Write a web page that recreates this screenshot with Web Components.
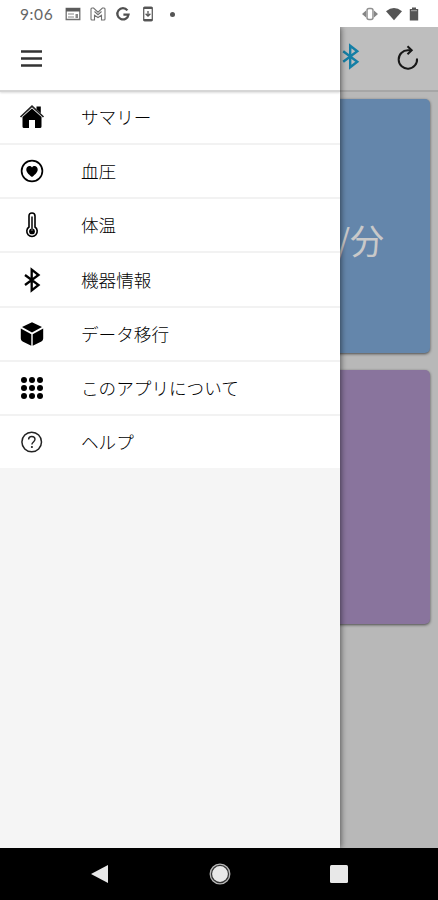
<!DOCTYPE html>
<html lang="ja">
<head>
<meta charset="utf-8">
<title>サマリー</title>
<style>
html,body{margin:0;height:100%;overflow:hidden}
body{font-family:"Noto Sans CJK JP",sans-serif;color:#222}
</style>
</head>
<body>
<health-app></health-app>
<script>
const ICONS = {
  news: '<path d="M1.2 2.5h13.6v11H1.2z" fill="none" stroke="#707070" stroke-width="1.3"/><path d="M1 2h14v3.5H1z" fill="#5c5c5c"/><path d="M3 8h6M3 11h6" stroke="#888" stroke-width="1.2"/><path d="M10.5 8H13v4h-2.5z" fill="#888"/>',
  mail: '<path d="M1 3q0-1 1-1h1.6L8 6.2 12.4 2H14q1 0 1 1v10q0 1-1 1h-2.5V9.2L8 11.5 4.500 9.200V14H2q-1 0-1-1zM4.500 5.500L8 8.700l3.500-3.200" fill="none" stroke="#707070" stroke-width="1.1"/>',
  google: '<path d="M12.400 4.400A5.600 5.600 0 1 0 13.500 8.600H8.400" fill="none" stroke="#505050" stroke-width="2.300"/>',
  update: '<rect x="3.700" y="1.200" width="8.600" height="13.600" rx="1" fill="none" stroke="#606060" stroke-width="1.300"/><path d="M3.700 2h8.600M3.700 14h8.600" stroke="#555" stroke-width="2"/><path d="M8 5v5M5.600 7.800L8 10.200l2.400-2.400" fill="none" stroke="#555" stroke-width="1.300"/>',
  vibrate: '<rect x="5" y="2.500" width="6" height="11" rx="2" fill="none" stroke="#909090" stroke-width="1.500"/><path d="M4 4.500L0 8l4 3.500zM12 4.500L16 8l-4 3.500z" fill="#858585"/>',
  wifi: '<path d="M0 5.200Q8-1 16 5.200L8 14.200z" fill="#555"/>',
  battery: '<path d="M6 1.500h4V3h2.200v11.500H3.800V3H6z" fill="#555"/><path d="M5 4.700h6" stroke="#aaa"/>',
  menu: '<path d="M0 4h24M0 12h24M0 20h24" stroke="#333" stroke-width="2.700"/>',
  bluetooth: '<path d="M5 7l13.500 10-6.800 5.300V1.700L18.500 7 5 17" fill="none" stroke="currentColor" stroke-width="2.300"/>',
  reload: '<path d="M21 12.500A9.200 9.200 0 1 1 12 4.300h2.500" fill="none" stroke="#171717" stroke-width="2"/><path d="M11.500.3l4.200 4-4.200 4" fill="none" stroke="#171717" stroke-width="2"/>',
  home: '<path d="M.5 12L12 1.200 23.500 12" fill="none" stroke="#222" stroke-width="1.700"/><path d="M16.500 1.500h4.300v6.700L16.500 4.300zM2.500 12.100L12 3.400l9.500 8.700v9.400q0 1.500-1.500 1.500h-5v-8H9v8H4q-1.500 0-1.500-1.500z" fill="#000"/>',
  heart: '<circle cx="12" cy="12" r="10.400" fill="none" stroke="#000" stroke-width="1.700"/><path d="M12 18C8 14.700 6.300 12.800 6.300 10.400c0-3.300 4-4.500 5.700-1.800 1.700-2.700 5.700-1.500 5.700 1.800 0 2.400-1.700 4.300-5.700 7.600z"/>',
  thermo: '<path d="M9 14V3q0-3 3-3t3 3v11a5.200 5.200 0 1 1-6 0z" fill="none" stroke="#000" stroke-width="1.600"/><circle cx="12" cy="18.400" r="2.900"/><path d="M12 3.500V18" stroke="#444" stroke-width="2"/>',
  cube: '<path d="M12 .3l10 4.700-10 5.400L2 5zM.8 6.500l10.500 5.700v11.500L2.600 19.500q-1.800-1-1.800-3zM23.200 6.500l-10.500 5.700v11.500l8.700-4.200q1.800-1 1.800-3z"/>',
  grid: '<circle cx="4" cy="4" r="3"/><circle cx="12" cy="4" r="3"/><circle cx="20" cy="4" r="3"/><circle cx="4" cy="12" r="3"/><circle cx="12" cy="12" r="3"/><circle cx="20" cy="12" r="3"/><circle cx="4" cy="20" r="3"/><circle cx="12" cy="20" r="3"/><circle cx="20" cy="20" r="3"/>',
  help: '<circle cx="11.700" cy="12" r="9.800" fill="none" stroke="#222" stroke-width="1.500"/><path d="M8.600 9.400c0-3.900 6.400-3.800 6.400-.1 0 2.600-3.100 2.700-3.100 5.300" fill="none" stroke="#222" stroke-width="1.400"/><circle cx="11.900" cy="17" r="1.100" fill="#222"/>',
  back: '<path d="M17 0v18L0 9z" fill="#e8e8e8"/>',
  circle: '<circle cx="11" cy="11" r="9.800" fill="#333" stroke="#b8b8b8" stroke-width="1.300"/><circle cx="11" cy="11" r="7.900" fill="#e8e8e8"/>',
  square: '<rect width="18" height="18" rx="1.500" fill="#e8e8e8"/>'
};
const BOX = {news:16,mail:16,google:16,update:16,vibrate:16,wifi:16,battery:16,back:18,circle:22,square:18};

function define(name, html, setup) {
  customElements.define(name, class extends HTMLElement {
    connectedCallback() {
      if (this.shadowRoot) return;
      this.attachShadow({mode:'open'}).innerHTML = html;
      if (setup) setup(this);
    }
  });
}

define('app-icon', '<style>:host{display:block;flex:none}svg{display:block;width:100%;height:100%;overflow:visible}</style><svg aria-hidden="true"></svg>', el => {
  const n = el.getAttribute('name'), b = BOX[n] || 24, s = el.shadowRoot.querySelector('svg');
  s.setAttribute('viewBox', `0 0 ${b} ${b}`);
  s.innerHTML = ICONS[n];
});

define('status-bar', `<style>
:host{display:flex;align-items:center;height:27px;box-sizing:border-box;padding:1px 16px 0 20px;background:#fff}
time{font:15.5px/26px Lato,sans-serif;color:#666;width:45px;letter-spacing:.6px}
.l{display:flex;align-items:center;gap:9px}.l app-icon{width:16px;height:16px}
i{width:5px;height:5px;border-radius:50%;background:#555;margin-left:5px}
.r{display:flex;gap:8px;margin-left:auto}.r app-icon{width:16px;height:16px}
.r .b{margin-left:-4px}
</style><time>9:06</time><div class="l"><app-icon name="news"></app-icon><app-icon name="mail"></app-icon><app-icon name="google"></app-icon><app-icon name="update"></app-icon><i></i></div>
<div class="r"><app-icon name="vibrate"></app-icon><app-icon name="wifi"></app-icon><app-icon name="battery" class="b"></app-icon></div>`);

define('summary-page', `<style>
:host{display:flex;flex-direction:column;height:100%;background:#b8b8b8}
header{height:65px;box-sizing:border-box;flex:none;display:flex;justify-content:flex-end;align-items:center;gap:33px;padding:0 18px 3px;background:#bebebe;border-bottom:2px solid #a6a6a6}
.bt{width:25px;height:25px;color:#147fa6;margin-top:-2px}.re{width:24px;height:24px;margin-top:1px}
main{display:flex;flex-direction:column;gap:17px;padding:7px 8px 0}
</style><header><app-icon class="bt" name="bluetooth"></app-icon><app-icon class="re" name="reload"></app-icon></header><main><slot></slot></main>`);

define('metric-card', `<style>
:host{display:flex;justify-content:flex-end;box-sizing:border-box;height:254px;border-radius:5px;padding:114px 46px 0;box-shadow:0 1px 3px #0009;font-size:34px;line-height:54px;color:#c9c9c9;font-weight:400}
:host([tone=blue]){background:#6486ab}:host([tone=purple]){background:#89749d}
</style><slot></slot>`);

define('menu-row', `<style>
:host{display:flex;align-items:center;height:54.25px;box-sizing:border-box;background:#fff;border-bottom:2px solid #f2f2f2;padding-left:20px;font-size:17.6px;line-height:26px;color:#000;font-weight:300}
:host(:last-child){border:0;height:52px}
app-icon{width:24px;height:24px;color:#000}span{margin-left:37px}
</style><app-icon></app-icon><span><slot></slot></span>`, el => {
  const old = el.shadowRoot.querySelector('app-icon');
  const icon = document.createElement('app-icon');
  icon.setAttribute('name', el.getAttribute('icon'));
  old.replaceWith(icon);
});

define('side-drawer', `<style>
:host{display:block;background:#f5f5f5;box-shadow:1px 0 6px #0008}
header{height:65px;box-sizing:border-box;background:#fff;border-bottom:2px solid #d6d6d6;padding:21px 0 0 21px;box-shadow:0 1px 2px #0002;position:relative}
app-icon{width:21px;height:21px}
nav{display:block;margin-top:-1.3px}
</style><header><app-icon name="menu"></app-icon></header><nav><slot></slot></nav>`);

define('nav-bar', `<style>
:host{display:flex;align-items:center;background:#000;height:52px;flex:none;box-sizing:border-box;padding-left:91px}
.b,.s{width:18px;height:18px}.c{width:22px;height:22px;margin-left:100px}.s{margin-left:99px}
</style><app-icon class="b" name="back"></app-icon><app-icon class="c" name="circle"></app-icon><app-icon class="s" name="square"></app-icon>`);

define('health-app', `<style>
:host{display:flex;flex-direction:column;width:438px;height:900px;overflow:hidden}
.body{flex:1;min-height:0;position:relative;overflow:hidden}
side-drawer{position:absolute;inset:0 auto 0 0;width:340px}
</style><status-bar></status-bar>
<div class="body"><summary-page><metric-card tone="blue">/分</metric-card><metric-card tone="purple"></metric-card></summary-page>
<side-drawer><menu-row icon="home">サマリー</menu-row><menu-row icon="heart">血圧</menu-row><menu-row icon="thermo">体温</menu-row><menu-row icon="bluetooth">機器情報</menu-row><menu-row icon="cube">データ移行</menu-row><menu-row icon="grid">このアプリについて</menu-row><menu-row icon="help">ヘルプ</menu-row></side-drawer></div>
<nav-bar></nav-bar>`);
</script>
</body>
</html>
